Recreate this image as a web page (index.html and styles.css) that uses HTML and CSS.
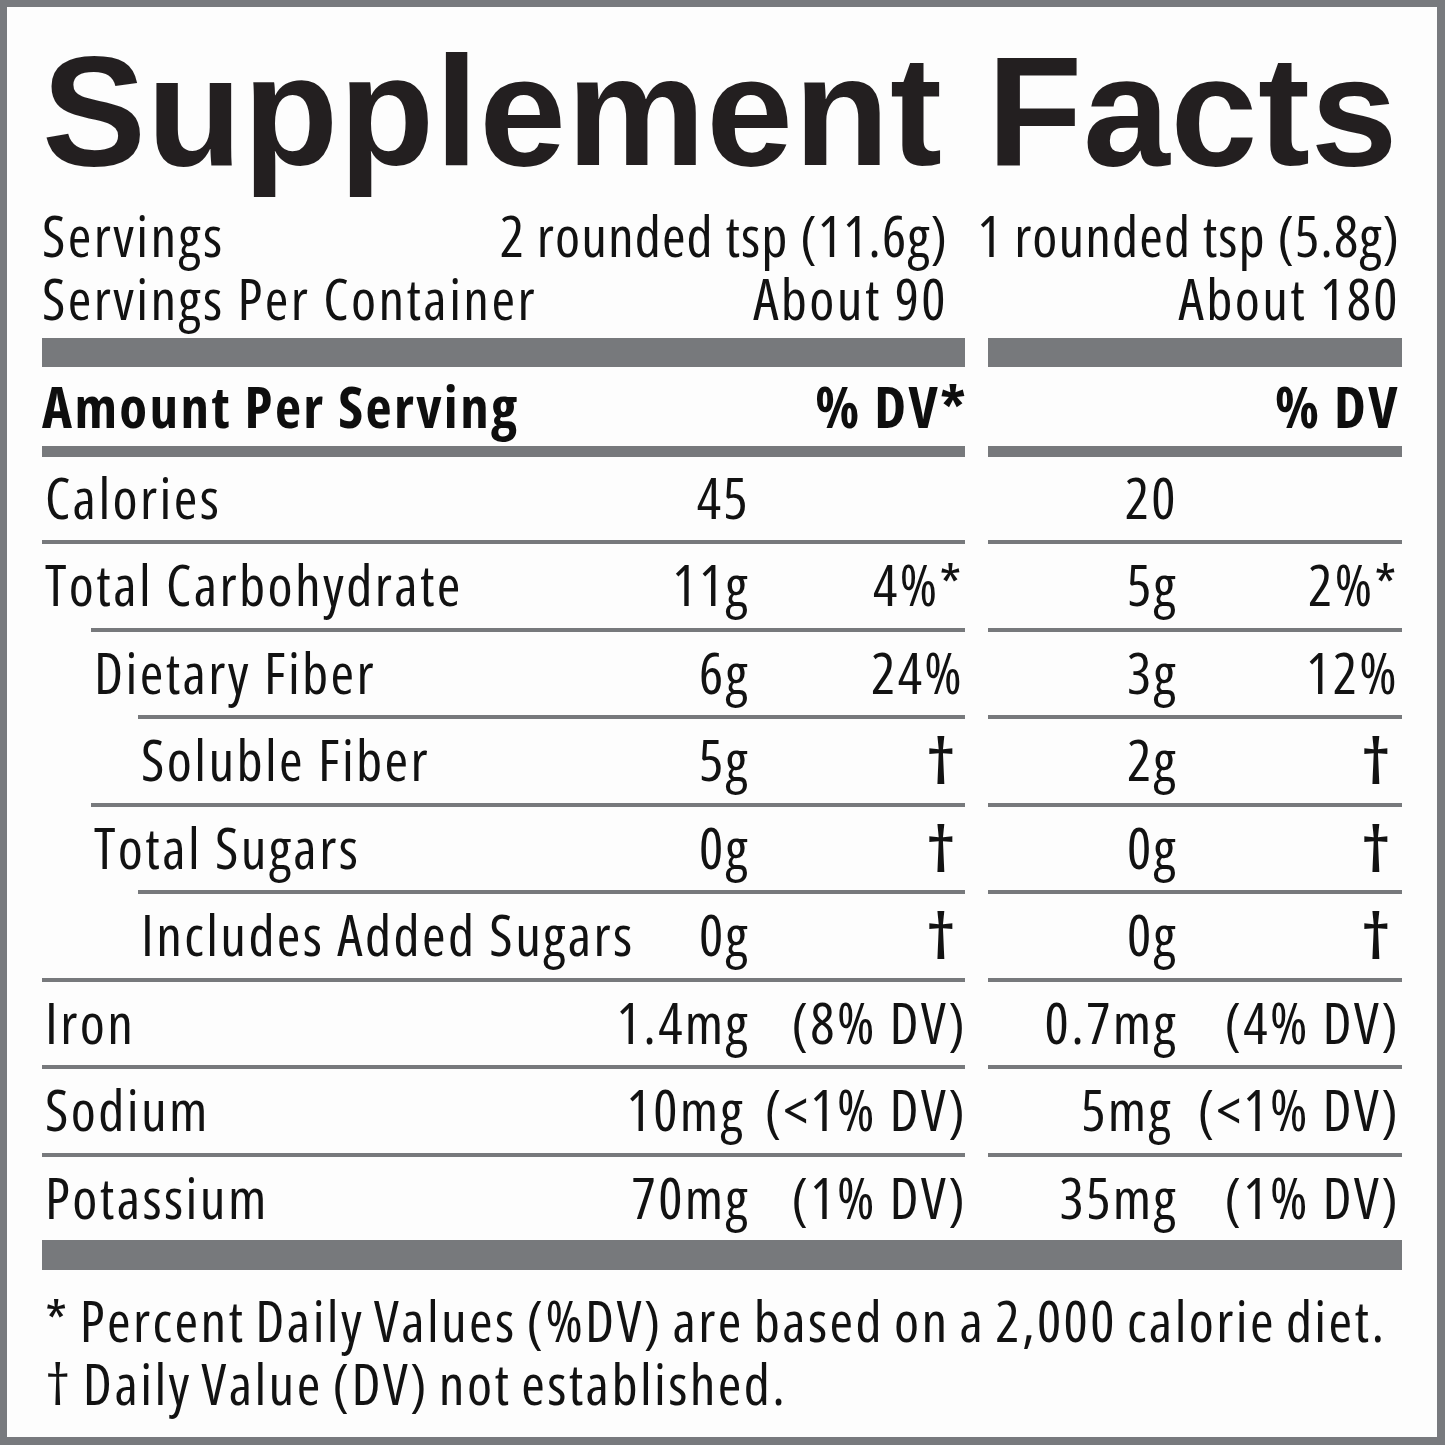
FILE: index.html
```html
<!DOCTYPE html>
<html lang="en">
<head>
<meta charset="utf-8">
<title>Supplement Facts</title>
<link rel="stylesheet" href="styles.css">
</head>
<body>
<div class="page">
  <h1 class="title">Supplement Facts</h1>
  <div class="cols">
    <div class="col col-left">
      <div class="srow"><span>Servings</span><span class="sval">2 rounded tsp (11.6g)</span></div>
      <div class="srow"><span>Servings Per Container</span><span>About 90</span></div>
      <div class="bar bar-thick"></div>
      <div class="hrow"><span>Amount Per Serving</span><span>% DV*</span></div>
      <div class="bar bar-thin"></div>
      <div class="row first"><span class="lab">Calories</span><span class="amt">45</span><span class="dv"></span></div>
      <div class="row"><span class="lab">Total Carbohydrate</span><span class="amt">11g</span><span class="dv">4%*</span></div>
      <div class="row ind1"><span class="lab">Dietary Fiber</span><span class="amt">6g</span><span class="dv">24%</span></div>
      <div class="row ind2"><span class="lab">Soluble Fiber</span><span class="amt">5g</span><span class="dv dag">†</span></div>
      <div class="row ind1"><span class="lab">Total Sugars</span><span class="amt">0g</span><span class="dv dag">†</span></div>
      <div class="row ind2"><span class="lab">Includes Added Sugars</span><span class="amt">0g</span><span class="dv dag">†</span></div>
      <div class="row mineral"><span class="lab">Iron</span><span class="amt">1.4mg</span><span class="dv">(8% DV)</span></div>
      <div class="row mineral tight"><span class="lab">Sodium</span><span class="amt">10mg</span><span class="dv">(&lt;1% DV)</span></div>
      <div class="row mineral"><span class="lab">Potassium</span><span class="amt">70mg</span><span class="dv">(1% DV)</span></div>
    </div>
    <div class="col col-right">
      <div class="srow"><span class="sval">1 rounded tsp (5.8g)</span></div>
      <div class="srow"><span>About 180</span></div>
      <div class="bar bar-thick"></div>
      <div class="hrow"><span>% DV</span></div>
      <div class="bar bar-thin"></div>
      <div class="row first"><span class="amt">20</span><span class="dv"></span></div>
      <div class="row"><span class="amt">5g</span><span class="dv">2%*</span></div>
      <div class="row"><span class="amt">3g</span><span class="dv">12%</span></div>
      <div class="row"><span class="amt">2g</span><span class="dv dag">†</span></div>
      <div class="row"><span class="amt">0g</span><span class="dv dag">†</span></div>
      <div class="row"><span class="amt">0g</span><span class="dv dag">†</span></div>
      <div class="row mineral"><span class="amt">0.7mg</span><span class="dv">(4% DV)</span></div>
      <div class="row mineral tight"><span class="amt">5mg</span><span class="dv">(&lt;1% DV)</span></div>
      <div class="row mineral"><span class="amt">35mg</span><span class="dv">(1% DV)</span></div>
    </div>
  </div>
  <div class="bar bar-bottom"></div>
  <div class="notes">
    <p>* Percent Daily Values (%DV) are based on a 2,000 calorie diet.</p>
    <p>† Daily Value (DV) not established.</p>
  </div>
</div>
</body>
</html>
```
FILE: styles.css
```css
* { box-sizing: border-box; }
html, body { margin: 0; padding: 0; background: #fdfdfd; }

.page {
  width: 1445px;
  height: 1445px;
  border-style: solid;
  border-color: #787a7e;
  border-width: 7px 8px 8px 7px;
  padding: 26px 35px 0 35px;
  background: #fdfdfd;
  color: #121212;
  font-family: "Open Sans", "DejaVu Sans Condensed", sans-serif;
  font-stretch: 75%;
  font-size: 57px;
  letter-spacing: 2.4px;
  overflow: hidden;
}

.title {
  margin: 0;
  font-family: "Liberation Sans", Arial, sans-serif;
  font-stretch: 100%;
  font-weight: 700;
  font-size: 156px;
  line-height: 156px;
  letter-spacing: 0.8px;
  color: #231f20;
  white-space: nowrap;
}

.cols {
  display: grid;
  grid-template-columns: 923px 414px;
  column-gap: 23px;
  margin-top: 15px;
}

.srow {
  display: flex;
  justify-content: space-between;
  line-height: 63px;
  height: 63px;
  white-space: nowrap;
}
.col-left .srow { padding-right: 17px; }
.col-right .srow { justify-content: flex-end; padding-right: 2px; margin-left: -24px; }
.sval { letter-spacing: 1.1px; }

.bar { background: #77797c; }
.bar-thick { height: 29px; margin-top: 8px; }
.bar-thin { height: 11px; }
.bar-bottom { height: 30px; }

.hrow {
  display: flex;
  justify-content: space-between;
  height: 79px;
  line-height: 79px;
  font-weight: 700;
  white-space: nowrap;
  color: #0e0e0e;
}
.col-left .hrow { margin-right: -3px; }
.col-right .hrow { justify-content: flex-end; padding-right: 2px; }

.row {
  display: grid;
  height: 87.5px;
  line-height: 81px;
  border-top: 4px solid #77797c;
  white-space: nowrap;
}
.row.first { border-top: 0; height: 83px; line-height: 81px; }

.col-left .row { grid-template-columns: minmax(0, 1fr) 140px 214px; padding-right: 1px; }
.col-left .row.ind1 { margin-left: 49px; }
.col-left .row.ind2 { margin-left: 96px; }

.col-right .row { grid-template-columns: 190px 221px; padding-right: 3px; }

.lab { padding-left: 3px; }
.amt { text-align: right; }
.dv { text-align: right; }
.dag { padding-right: 6px; font-size: 64px; font-weight: 600; }
.row.mineral .dv { margin-right: -3px; }
.col-right .row.mineral .dv { margin-right: -1px; }
.row.tight .amt { padding-right: 5px; }

.notes { margin-top: 19px; }
.notes p {
  margin: 0;
  line-height: 63px;
  white-space: nowrap;
  padding-left: 3px;
  word-spacing: -3px;
}
```
